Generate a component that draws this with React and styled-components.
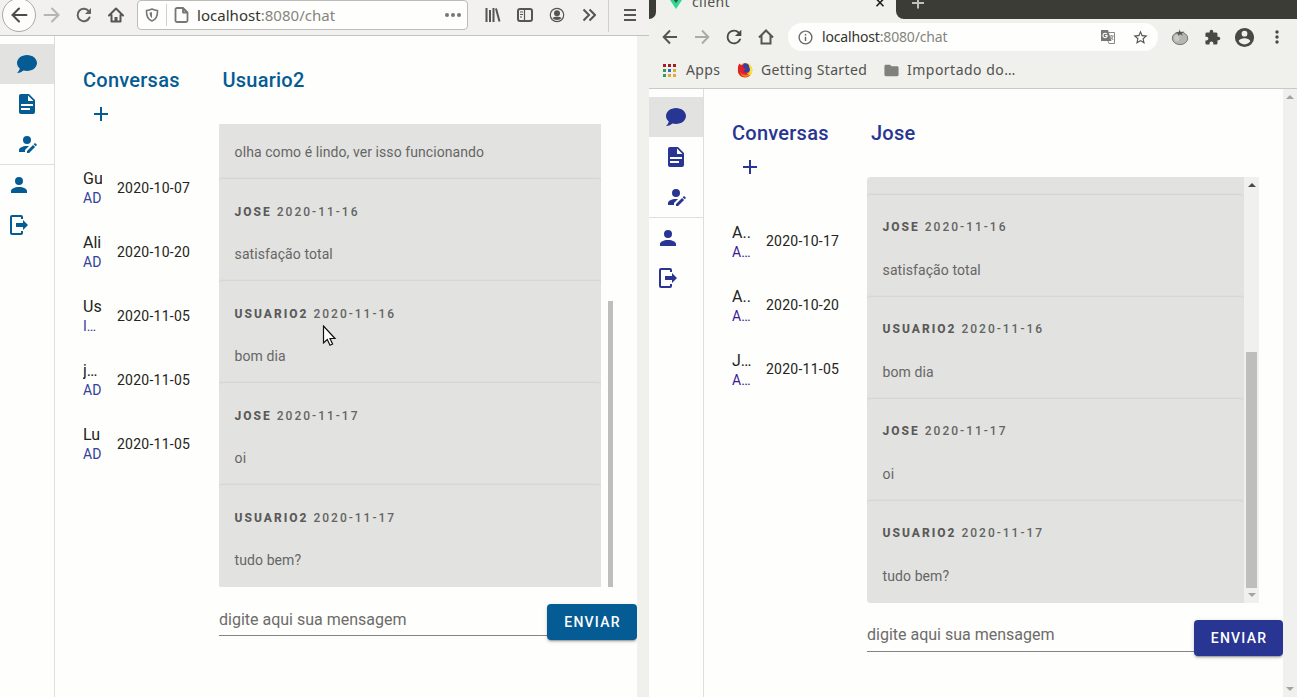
import React from "react";
import styled, { createGlobalStyle } from "styled-components";

const Global = createGlobalStyle`
  * { box-sizing: border-box; }
  html, body { margin: 0; padding: 0; overflow: hidden; background: #fefefc; }
  svg { display: block; flex: none; }
`;

const UI_FONT = `"Noto Sans", "Open Sans", sans-serif`;

const Desktop = styled.div`
  display: flex;
  position: relative;
  width: 1297px;
  height: 697px;
  overflow: hidden;
  background: #fefefc;
  font-family: Roboto, sans-serif;
  color: #222;
`;

const Window = styled.section`
  display: flex;
  flex-direction: column;
  width: ${(p) => p.$width}px;
  height: 697px;
`;

/* ---------- Firefox chrome ---------- */

const FoxBar = styled.div`
  display: flex;
  align-items: center;
  height: 36px;
  padding: 0 3px 5px;
  background: #f3f1ef;
  border-bottom: 1px solid #c3c3c1;
`;

const Slot = styled.div`
  display: flex;
  align-items: center;
  justify-content: center;
  flex: none;
  width: ${(p) => p.$w || 32}px;
  height: 30px;
  color: ${(p) => p.$color || "#555552"};
`;

const BackCircle = styled.div`
  display: flex;
  align-items: center;
  justify-content: center;
  flex: none;
  width: 34px;
  height: 34px;
  margin: 0 0 0 -1px;
  border: 1px solid #aaa9a7;
  border-radius: 50%;
  background: #fdfcfb;
  color: #4b4b48;
`;

const FoxUrl = styled.div`
  display: flex;
  align-items: center;
  width: 331px;
  height: 30px;
  margin: 0 9px 0 5px;
  padding-left: 6px;
  background: #fefefc;
  border: 1px solid #bcbcb9;
  border-radius: 4px;
`;

const Divider = styled.div`
  width: 1px;
  height: ${(p) => p.$h}px;
  margin: ${(p) => p.$m || "0"};
  background: #cfcfcc;
`;

const UrlText = styled.div`
  flex: 1;
  padding-left: 8px;
  font-family: ${UI_FONT};
  font-size: ${(p) => p.$size}px;
  letter-spacing: ${(p) => p.$ls}px;
  line-height: 20px;
  white-space: nowrap;
  color: #85857f;
  b { font-weight: 400; color: #33332f; }
`;

/* ---------- Chromium chrome ---------- */

const TabStrip = styled.div`
  display: flex;
  height: 19px;
  background: #f0f0ed;
`;

const StripStart = styled.div`
  width: 7px;
  background: #3b3c36;
  border-bottom-right-radius: 7px;
`;

const Tab = styled.div`
  display: flex;
  align-items: flex-start;
  width: 240px;
  padding-left: 14px;
`;

const TabTitle = styled.div`
  width: 182px;
  margin: -8px 0 0 10px;
  font-family: ${UI_FONT};
  font-size: 14px;
  letter-spacing: 0.4px;
  line-height: 20px;
  color: #52524e;
`;

const StripRest = styled.div`
  flex: 1;
  padding-left: 16px;
  background: #3b3c36;
  border-bottom-left-radius: 8px;
  color: #c0c0bb;
`;

const ChromeBar = styled.div`
  display: flex;
  align-items: center;
  height: 36px;
  padding-left: 5px;
  background: #f0f0ed;
`;

const Omnibox = styled.div`
  display: flex;
  align-items: center;
  width: 370px;
  height: 28px;
  margin: 0 6px;
  padding: 0 2px 0 9px;
  border-radius: 14px;
  background: #fefefc;
  color: #666;
`;

const Bookmarks = styled.div`
  display: flex;
  align-items: center;
  height: 34px;
  padding: 0 0 3px 14px;
  background: #f0f0ed;
  border-bottom: 1px solid #c9c9c6;
`;

const Bookmark = styled.div`
  display: flex;
  align-items: center;
  gap: ${(p) => p.$gap}px;
  width: ${(p) => p.$w}px;
  font-family: ${UI_FONT};
  font-size: 14px;
  letter-spacing: ${(p) => p.$ls}px;
  line-height: 20px;
  white-space: nowrap;
  color: #52524e;
`;

/* ---------- Chat application ---------- */

const Page = styled.div`
  display: flex;
  flex: 1;
  min-height: 0;
  background: #fefefc;
`;

const Rail = styled.nav`
  width: 55px;
  padding-top: 8px;
  border-right: 1px solid #dededc;
  color: ${(p) => p.$tone};
`;

const RailItem = styled.div`
  display: flex;
  align-items: center;
  height: 40px;
  padding-left: ${(p) => (p.$outer ? 7 : 15)}px;
  background: ${(p) => (p.$active ? "#e2e2e1" : "transparent")};
`;

const RailLine = styled.div`
  height: 1px;
  background: #dededc;
`;

const People = styled.div`
  width: ${(p) => p.$width}px;
  padding: 32px 0 0 28px;
  color: ${(p) => p.$tone};
`;

const Heading = styled.h1`
  margin: 0;
  padding-left: ${(p) => p.$indent || 0}px;
  font-size: 20px;
  font-weight: 500;
  line-height: 24px;
  letter-spacing: 0.25px;
  color: ${(p) => p.$tone};
`;

const AddButton = styled.div`
  margin: 10px 0 30px 6px;
`;

const Person = styled.div`
  display: flex;
  align-items: center;
  height: 64px;
`;

const PersonText = styled.div`
  width: 19px;
  margin-right: 15px;
  padding-top: ${(p) => p.$drop}px;
  overflow: hidden;
  white-space: nowrap;
`;

const PersonName = styled.div`
  font-size: 16px;
  line-height: 20px;
  color: #232321;
`;

const PersonRole = styled.div`
  margin-top: -1px;
  font-size: 14px;
  line-height: 20px;
  color: ${(p) => p.$tone};
`;

const PersonDate = styled.div`
  font-size: 14px;
  letter-spacing: 0.25px;
  line-height: 20px;
  white-space: nowrap;
  color: #232321;
`;

const Talk = styled.div`
  display: flex;
  flex-direction: column;
  flex: 1;
  padding-top: 32px;
`;

const History = styled.div`
  display: flex;
  height: ${(p) => p.$h}px;
  margin: 32px 0 17px;
`;

const Messages = styled.div`
  display: flex;
  flex-direction: column;
  justify-content: flex-end;
  width: ${(p) => p.$w}px;
  overflow: hidden;
  border-radius: ${(p) => p.$radius};
  background: #e2e2e1;
`;

const Message = styled.article`
  flex: none;
  height: 102px;
  padding: ${(p) => p.$pad}px 15.6px 0;
  border-radius: 4px;
  background: #e2e2e1;
  box-shadow: 0 -1px 2px rgba(0, 0, 0, 0.07);
`;

const MessageHead = styled.div`
  height: 32px;
  font-size: 12px;
  font-weight: 500;
  line-height: 32px;
  letter-spacing: 2px;
  text-transform: uppercase;
  color: #646462;
  b { font-weight: 800; color: #5a5a58; }
`;

const MessageBody = styled.div`
  margin-top: ${(p) => p.$gap}px;
  font-size: 14px;
  line-height: 20px;
  letter-spacing: 0.08px;
  color: #666664;
`;

const ThinThumb = styled.div`
  align-self: flex-end;
  width: 5px;
  height: 286px;
  margin-left: 7px;
  background: #bebebd;
`;

const Track = styled.div`
  display: flex;
  flex-direction: column;
  align-items: center;
  justify-content: space-between;
  flex: none;
  width: ${(p) => p.$w}px;
  padding: 6px 0;
  background: #f0f0ef;
`;

const Thumb = styled.div`
  width: 11px;
  height: 236px;
  margin: 163px 0 4px;
  background: #bebebd;
`;

const Composer = styled.div`
  display: flex;
  height: 36px;
`;

const Field = styled.div`
  flex: 1;
  height: 32px;
  border-bottom: 1px solid #858583;
  font-size: 16px;
  line-height: ${(p) => p.$lh}px;
  color: #6c6c6a;
`;

const Send = styled.button`
  width: ${(p) => p.$w}px;
  height: 36px;
  padding: 0 0 0 1px;
  border: 0;
  border-radius: 4px;
  background: ${(p) => p.$tone};
  box-shadow: 0 3px 1px -2px rgba(0, 0, 0, 0.2), 0 2px 2px rgba(0, 0, 0, 0.14), 0 1px 5px rgba(0, 0, 0, 0.12);
  font-family: Roboto, sans-serif;
  font-size: 14px;
  font-weight: 500;
  letter-spacing: 1.25px;
  color: #fff;
`;

const Gutter = styled.div`
  width: 12px;
  background: #f0f0ed;
`;

const Pointer = styled.div`
  position: absolute;
  left: 322px;
  top: 325px;
`;

/* ---------- Icons ---------- */

const PATHS = {
  chat: "M12,3C17.5,3 22,6.58 22,11C22,15.42 17.5,19 12,19C10.76,19 9.57,18.82 8.47,18.5C5.55,21 2,21 2,21C4.33,18.67 4.7,17.1 4.75,16.5C3.05,15.07 2,13.13 2,11C2,6.58 6.5,3 12,3Z",
  file: "M13,9H18.5L13,3.5V9M6,2H14L20,8V20A2,2 0 0,1 18,22H6C4.89,22 4,21.1 4,20V4C4,2.89 4.89,2 6,2M15,18V16H6V18H15M18,14V12H6V14H18Z",
  accountEdit: "M21.7,13.35L20.7,14.35L18.65,12.3L19.65,11.3C19.86,11.09 20.21,11.09 20.42,11.3L21.7,12.58C21.91,12.79 21.91,13.14 21.7,13.35M12,18.94L18.06,12.88L20.11,14.93L14.06,21H12V18.94M12,14C7.58,14 4,15.79 4,18V20H10V18.11L14,14.11C13.34,14.03 12.67,14 12,14M12,4A4,4 0 0,0 8,8A4,4 0 0,0 12,12A4,4 0 0,0 16,8A4,4 0 0,0 12,4Z",
  account: "M12,4A4,4 0 0,1 16,8A4,4 0 0,1 12,12A4,4 0 0,1 8,8A4,4 0 0,1 12,4M12,14C16.42,14 20,15.79 20,18V20H4V18C4,15.79 7.58,14 12,14Z",
  logout: "M16,17V14H9V10H16V7L21,12L16,17M14,2A2,2 0 0,1 16,4V6H14V4H5V20H14V18H16V20A2,2 0 0,1 14,22H5A2,2 0 0,1 3,20V4A2,2 0 0,1 5,2H14Z",
  plus: "M19,13H13V19H11V13H5V11H11V5H13V11H19V13Z",
  reload: "M17.65,6.35C16.2,4.9 14.21,4 12,4A8,8 0 0,0 4,12A8,8 0 0,0 12,20C15.73,20 18.84,17.45 19.73,14H17.65C16.83,16.33 14.61,18 12,18A6,6 0 0,1 6,12A6,6 0 0,1 12,6C13.66,6 15.14,6.69 16.22,7.78L13,11H20V4L17.65,6.35Z",
  puzzle: "M20.5,11H19V7C19,5.89 18.1,5 17,5H13V3.5A2.5,2.5 0 0,0 10.5,1A2.5,2.5 0 0,0 8,3.5V5H4A2,2 0 0,0 2,7V10.8H3.5C5,10.8 6.2,12 6.2,13.5C6.2,15 5,16.2 3.5,16.2H2V20A2,2 0 0,0 4,22H7.8V20.5C7.8,19 9,17.8 10.5,17.8C12,17.8 13.2,19 13.2,20.5V22H17A2,2 0 0,0 19,20V16H20.5A2.5,2.5 0 0,0 23,13.5A2.5,2.5 0 0,0 20.5,11Z",
  avatar: "M12,19.2C9.5,19.2 7.29,17.92 6,16C6.03,14 10,12.9 12,12.9C14,12.9 17.97,14 18,16C16.71,17.92 14.5,19.2 12,19.2M12,5A3,3 0 0,1 15,8A3,3 0 0,1 12,11A3,3 0 0,1 9,8A3,3 0 0,1 12,5M12,2A10,10 0 0,0 2,12A10,10 0 0,0 12,22A10,10 0 0,0 22,12C22,6.47 17.5,2 12,2Z",
  star: "M12,15.39L8.24,17.66L9.23,13.38L5.91,10.5L10.29,10.13L12,6.09L13.71,10.13L18.09,10.5L14.77,13.38L15.76,17.66M22,9.24L14.81,8.63L12,2L9.19,8.63L2,9.24L7.45,13.97L5.82,21L12,17.27L18.18,21L16.54,13.97L22,9.24Z",
  info: "M11,9H13V7H11M12,20C7.59,20 4,16.41 4,12C4,7.59 7.59,4 12,4C16.41,4 20,7.59 20,12C20,16.41 16.41,20 12,20M12,2A10,10 0 0,0 2,12A10,10 0 0,0 12,22A10,10 0 0,0 22,12A10,10 0 0,0 12,2M11,17H13V11H11V17Z",
  folder: "M10,4H4C2.89,4 2,4.89 2,6V18A2,2 0 0,0 4,20H20A2,2 0 0,0 22,18V8C22,6.89 21.1,6 20,6H12L10,4Z",
};

const Icon = ({ name, size = 24 }) => (
  <svg width={size} height={size} viewBox="0 0 24 24" fill="currentColor">
    <path d={PATHS[name]} />
  </svg>
);

const Line = ({ w = 18, h = w, sw = 2, d, join = "miter", cap = "butt", children }) => (
  <svg width={w} height={h} viewBox={`0 0 ${w} ${h}`} fill="none" stroke="currentColor" strokeWidth={sw} strokeLinejoin={join} strokeLinecap={cap}>
    {d && <path d={d} />}
    {children}
  </svg>
);

const ArrowLeft = ({ cap }) => <Line cap={cap} d="M16.5 9H2.5M9 2.5L2.5 9L9 15.5" />;
const ArrowRight = ({ cap }) => <Line cap={cap} d="M1.5 9H15.5M9 2.5L15.5 9L9 15.5" />;

const Tomato = () => (
  <svg width="18" height="18" viewBox="0 0 18 18">
    <ellipse cx="9" cy="10.3" rx="7.7" ry="6.3" fill="#b5b5b2" stroke="#777774" />
    <ellipse cx="6" cy="10" rx="2.5" ry="3.2" fill="#cacac7" />
    <path d="M8.6 1L9.4 4.2L13.5 3.6L10.6 5.4L12 7.6L9 6.2L7 8L7.2 5.8L4 5L8 4Z" fill="#555552" />
  </svg>
);

const Translate = () => (
  <svg width="16" height="16" viewBox="0 0 16 16">
    <path d="M1 1H8L11.5 12H1Z" fill="#777774" />
    <path d="M8.5 3.5H14.5V14.5H9L8 12" fill="none" stroke="#888885" />
    <path d="M7 5.2A2.2 2.2 0 1 0 7 7.6V6.5H5" fill="none" stroke="#fff" strokeWidth="1.1" />
    <path d="M9.8 7H13.5M11.7 6V7M13 7.2C12.5 9 11.5 10 10.5 10.8M10.5 8L13.2 11" fill="none" stroke="#888885" />
  </svg>
);

const FoxLogo = () => (
  <svg width="16" height="16" viewBox="0 0 16 16">
    <circle cx="8" cy="8.4" r="7.3" fill="#f5b921" />
    <path d="M7 1.3C11 1 13 3.5 13.2 7C13 10 10 12 7.5 11.5C5 11 3.5 8 5 4Z" fill="#3b3fa5" />
    <path d="M1 4.5L2.3 1.5L4 3.2L6.5 2.5L5.8 5L9 7L6.5 8.4L7.5 10.3L10.5 10C9.5 12 11 13 13 13.4A7.3 7.3 0 0 1 1 10Z" fill="#e0202a" />
    <path d="M3 9.5C4 12 7 13.5 10.5 12.5L12.5 13.8C9 16.5 4 15 3 9.5Z" fill="#f07a1e" />
    <path d="M11.2 1L14.5 4.5L15.4 8L14.8 11L12.5 13L13 7.5Z" fill="#fbe23c" />
  </svg>
);

const APP_DOTS = ["#a61c25", "#a61c25", "#a61c25", "#2f9e5c", "#3e66c4", "#dcaa35", "#2f9e5c", "#dcaa35", "#dcaa35"];

const AppsGrid = () => (
  <svg width="13" height="13" viewBox="0 0 13 13">
    {APP_DOTS.map((c, i) => (
      <rect key={i} x={(i % 3) * 5} y={Math.floor(i / 3) * 5} width="3" height="3" fill={c} />
    ))}
  </svg>
);

const Caret = ({ down, color = "#a3a3a1" }) => (
  <svg width="8" height="4" viewBox="0 0 8 4">
    <path d={down ? "M0 0H8L4 4Z" : "M0 4H8L4 0Z"} fill={color} />
  </svg>
);

/* ---------- Composition ---------- */

const MESSAGES = [
  ["Jose", "2020-11-16", "satisfação total"],
  ["Usuario2", "2020-11-16", "bom dia"],
  ["Jose", "2020-11-17", "oi"],
  ["Usuario2", "2020-11-17", "tudo bem?"],
];

const SideRail = ({ tone }) => (
  <Rail $tone={tone}>
    <RailItem $active><Icon name="chat" /></RailItem>
    <RailItem><Icon name="file" /></RailItem>
    <RailItem><Icon name="accountEdit" /></RailItem>
    <RailLine />
    <RailItem $outer><Icon name="account" /></RailItem>
    <RailItem $outer><Icon name="logout" /></RailItem>
  </Rail>
);

const Chat = ({ tone, roleTone, width, people, nameDrop, peer, historyHeight, listWidth, listRadius, messages, headPad, scrollbar, indent, fieldLine, sendWidth }) => (
  <>
    <SideRail tone={tone} />
    <People $width={width} $tone={tone}>
      <Heading $tone={tone}>Conversas</Heading>
      <AddButton><Icon name="plus" /></AddButton>
      {people.map(([name, role, date], i) => (
        <Person key={i}>
          <PersonText $drop={nameDrop}>
            <PersonName>{name}</PersonName>
            <PersonRole $tone={roleTone}>{role}</PersonRole>
          </PersonText>
          <PersonDate>{date}</PersonDate>
        </Person>
      ))}
    </People>
    <Talk>
      <Heading $tone={tone} $indent={indent}>{peer}</Heading>
      <History $h={historyHeight}>
        <Messages $w={listWidth} $radius={listRadius}>
          {messages.map(([who, when, body], i) => (
            <Message key={i} $pad={headPad}>
              <MessageHead>{who && <><b>{who}</b> {when}</>}</MessageHead>
              <MessageBody $gap={33 - headPad}>{body}</MessageBody>
            </Message>
          ))}
        </Messages>
        {scrollbar}
      </History>
      <Composer>
        <Field $lh={fieldLine}>digite aqui sua mensagem</Field>
        <Send $tone={tone} $w={sendWidth}>ENVIAR</Send>
      </Composer>
    </Talk>
  </>
);

const LEFT_PEOPLE = [
  ["Gu", "AD", "2020-10-07"],
  ["Ali", "AD", "2020-10-20"],
  ["Us", "I…", "2020-11-05"],
  ["j…", "AD", "2020-11-05"],
  ["Lu", "AD", "2020-11-05"],
];

const RIGHT_PEOPLE = [
  ["A..", "A…", "2020-10-17"],
  ["A..", "A…", "2020-10-20"],
  ["J…", "A…", "2020-11-05"],
];

const FirefoxToolbar = () => (
  <FoxBar>
    <BackCircle><ArrowLeft cap="round" /></BackCircle>
    <Slot $color="#b5b5b2"><ArrowRight cap="round" /></Slot>
    <Slot $color="#62625f">
      <Line w={16} cap="round" d="M13.5 10.5A6.2 6.2 0 1 1 13 4.5">
        <path d="M15 1V7H9Z" fill="currentColor" stroke="none" />
      </Line>
    </Slot>
    <Slot>
      <Line w={16} cap="round" join="round" d="M1 8.5L8 1.5L15 8.5M3.5 8V14.5H12.5V8">
        <path d="M8 14V10" strokeWidth="3" strokeLinecap="butt" />
      </Line>
    </Slot>
    <FoxUrl>
      <Slot $w={16} $color="#777774">
        <Line w={14} sw={1.6} join="round" d="M1.5 2.5C4 2.3 5.5 1.8 7 1C8.5 1.8 10 2.3 12.5 2.5C12.7 8 11 11.5 7 13C3 11.5 1.3 8 1.5 2.5Z">
          <path d="M7 4V10C5.5 9 4.6 7.5 4.5 4.7Z" fill="currentColor" stroke="none" />
        </Line>
      </Slot>
      <Divider $h={22} $m="0 7px 0 6px" />
      <Slot $w={15} $color="#777774">
        <Line w={15} h={16} sw={1.8} join="round" d="M3 1H9L13.5 5.5V13.5A1.5 1.5 0 0 1 12 15H3A1.5 1.5 0 0 1 1.5 13.5V2.5A1.5 1.5 0 0 1 3 1ZM9 1V5.5H13.5" />
      </Slot>
      <UrlText $size={15} $ls={0.03}><b>localhost</b>:8080/chat</UrlText>
      <Slot $w={30} $color="#777774">
        <svg width="18" height="4" viewBox="0 0 18 4" fill="currentColor">
          <circle cx="4" cy="2" r="2" /><circle cx="10" cy="2" r="2" /><circle cx="16" cy="2" r="2" />
        </svg>
      </Slot>
    </FoxUrl>
    <Slot><Line w={16} d="M1.5 1V15M5 3V15M8.5 1V15M11 1.5L14.5 14.5" /></Slot>
    <Slot>
      <Line w={16} h={14}>
        <rect x="1" y="1" width="14" height="12" rx="2" />
        <path d="M7.5 1V13" strokeWidth="1.2" /><path d="M3 4H6M3 6.5H6M3 9H5" strokeWidth="1" />
      </Line>
    </Slot>
    <Slot>
      <Line w={16} sw={1.2}>
        <circle cx="8" cy="8" r="6.7" />
        <circle cx="8" cy="6.3" r="3" fill="currentColor" stroke="none" />
        <path d="M3.5 11C5 9.3 11 9.3 12.5 11C11 13.6 5 13.6 3.5 11Z" fill="currentColor" stroke="none" />
      </Line>
    </Slot>
    <Slot><Line w={14} d="M1.5 1.5L7 7L1.5 12.5M7.5 1.5L13 7L7.5 12.5" /></Slot>
    <Divider $h={34} $m="0 5px 0 3px" />
    <Slot><Line w={12} d="M0 1H12M0 6H12M0 11H12" /></Slot>
  </FoxBar>
);

const ChromiumToolbar = () => (
  <>
    <TabStrip>
      <StripStart />
      <Tab>
        <svg width="12" height="9" viewBox="0 0 12 9">
          <path d="M0 0H12L6 9Z" fill="#2fd98c" /><path d="M3.8 0H8.2L6 3Z" fill="#3a4a56" />
        </svg>
        <TabTitle>client</TabTitle>
        <Line w={12} h={9} sw={1.6} d="M2.5 -1L9.5 6.3M9.5 -1L2.5 6.3" />
      </Tab>
      <StripRest>
        <Line w={12} h={9} d="M0 3H12M6 -3V8.5" />
      </StripRest>
    </TabStrip>
    <ChromeBar>
      <Slot><Line w={16} d="M15 8H2M8 1.5L1.7 8L8 14.5" /></Slot>
      <Slot $color="#aaaaa7"><Line w={16} d="M1 8H14M8 1.5L14.3 8L8 14.5" /></Slot>
      <Slot $color="#484845"><Icon name="reload" size={22} /></Slot>
      <Slot><Line w={16} d="M1 8.5L8 1.5L15 8.5M3.5 6.5V14.5H12.5V6.5" /></Slot>
      <Omnibox>
        <Icon name="info" size={17} />
        <UrlText $size={14} $ls={-0.16}><b>localhost</b>:8080/chat</UrlText>
        <Slot><Translate /></Slot>
        <Slot><Icon name="star" size={17} /></Slot>
      </Omnibox>
      <Slot><Tomato /></Slot>
      <Slot $color="#484845"><Icon name="puzzle" size={17} /></Slot>
      <Slot $color="#484845"><Icon name="avatar" size={23} /></Slot>
      <Slot $color="#484845" $w={33}>
        <svg width="4" height="14" viewBox="0 0 4 14" fill="currentColor">
          <circle cx="2" cy="2" r="1.7" /><circle cx="2" cy="7" r="1.7" /><circle cx="2" cy="12" r="1.7" />
        </svg>
      </Slot>
    </ChromeBar>
    <Bookmarks>
      <Bookmark $w={74} $gap={10} $ls={0.4}><AppsGrid />Apps</Bookmark>
      <Bookmark $w={146} $gap={8} $ls={0.37}><FoxLogo />Getting Started</Bookmark>
      <Bookmark $w={140} $gap={7} $ls={0.48}>
        <Slot $w={17} $color="#80807d"><Icon name="folder" size={17} /></Slot>Importado do…
      </Bookmark>
    </Bookmarks>
  </>
);

export default function App() {
  return (
    <>
      <Global />
      <Desktop>
        <Window $width={649}>
          <FirefoxToolbar />
          <Page>
            <Chat
              tone="#055b93"
              roleTone="#35409a"
              width={164}
              people={LEFT_PEOPLE}
              nameDrop={1}
              peer="Usuario2"
              indent={3.4}
              historyHeight={463}
              listWidth={382}
              listRadius="2px 0 0 2px"
              messages={[["", "", "olha como é lindo, ver isso funcionando"], ...MESSAGES]}
              headPad={17}
              scrollbar={<ThinThumb />}
              fieldLine={31}
              sendWidth={90}
            />
            <Gutter />
          </Page>
        </Window>
        <Window $width={648}>
          <ChromiumToolbar />
          <Page>
            <Chat
              tone="#283593"
              roleTone="#3b1a96"
              width={163}
              people={RIGHT_PEOPLE}
              nameDrop={3}
              peer="Jose"
              indent={4}
              historyHeight={426}
              listWidth={377}
              listRadius="4px 0 0 4px"
              messages={MESSAGES}
              headPad={16}
              scrollbar={
                <Track $w={15}>
                  <Caret color="#4a4a48" />
                  <Thumb />
                  <Caret down />
                </Track>
              }
              fieldLine={30}
              sendWidth={89}
            />
            <Track $w={14}>
              <Caret />
              <Caret down />
            </Track>
          </Page>
        </Window>
        <Pointer>
          <svg width="15" height="22" viewBox="0 0 15 22">
            <path d="M1.5 1V18L5.3 14.5L8 20.2L10.6 19L8 13.5H13Z" fill="#fff" stroke="#111" strokeWidth="1.2" />
          </svg>
        </Pointer>
      </Desktop>
    </>
  );
}
